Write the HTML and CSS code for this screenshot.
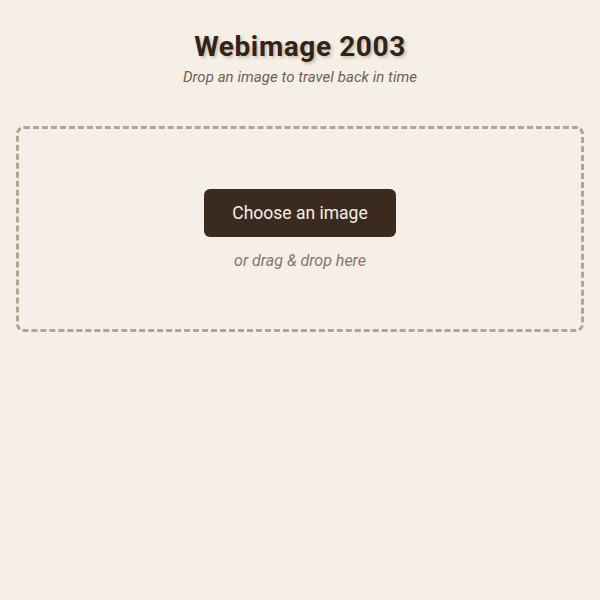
FILE: index.html
```html
<!DOCTYPE html>
<html>
<head>
<meta charset="utf-8">
<link rel="stylesheet" href="styles.css">
</head>
<body>
<div class="page">
  <header class="header">
    <h1 class="title">Webimage 2003</h1>
    <p class="subtitle">Drop an image to travel back in time</p>
  </header>
  <div class="dropzone">
    <button class="choose">Choose an image</button>
    <p class="hint">or drag &amp; drop here</p>
  </div>
</div>
</body>
</html>
```
FILE: styles.css
```css
html, body {
  margin: 0;
  padding: 0;
  background: #f6efe8;
  font-family: Roboto, "Liberation Sans", sans-serif;
}
.page {
  padding: 30px 16px;
  display: flex;
  flex-direction: column;
}
.header {
  text-align: center;
}
.title {
  margin: 0;
  font-size: 28px;
  font-weight: 700;
  color: #2f241b;
  line-height: 34px;
  letter-spacing: 0.6px;
  text-shadow: 2px 2px 3px rgba(160, 130, 90, 0.45);
}
.subtitle {
  margin: 4px 0 0;
  font-size: 15px;
  letter-spacing: 0.05px;
  font-style: italic;
  color: #6e5f52;
  line-height: 18px;
}
.dropzone {
  margin-top: 40px;
  height: 200px;
  border: 3px dashed #b3a58e;
  border-radius: 8px;
  display: flex;
  flex-direction: column;
  align-items: center;
  justify-content: center;
}
.choose {
  width: 192px;
  height: 48px;
  border: none;
  border-radius: 6px;
  background: #3a2a1f;
  color: #f6efe8;
  font-family: Roboto, "Liberation Sans", sans-serif;
  font-size: 17.5px;
  cursor: pointer;
}
.hint {
  margin: 15px 0 0;
  font-size: 16px;
  font-style: italic;
  color: #857666;
  line-height: 18px;
}
```
